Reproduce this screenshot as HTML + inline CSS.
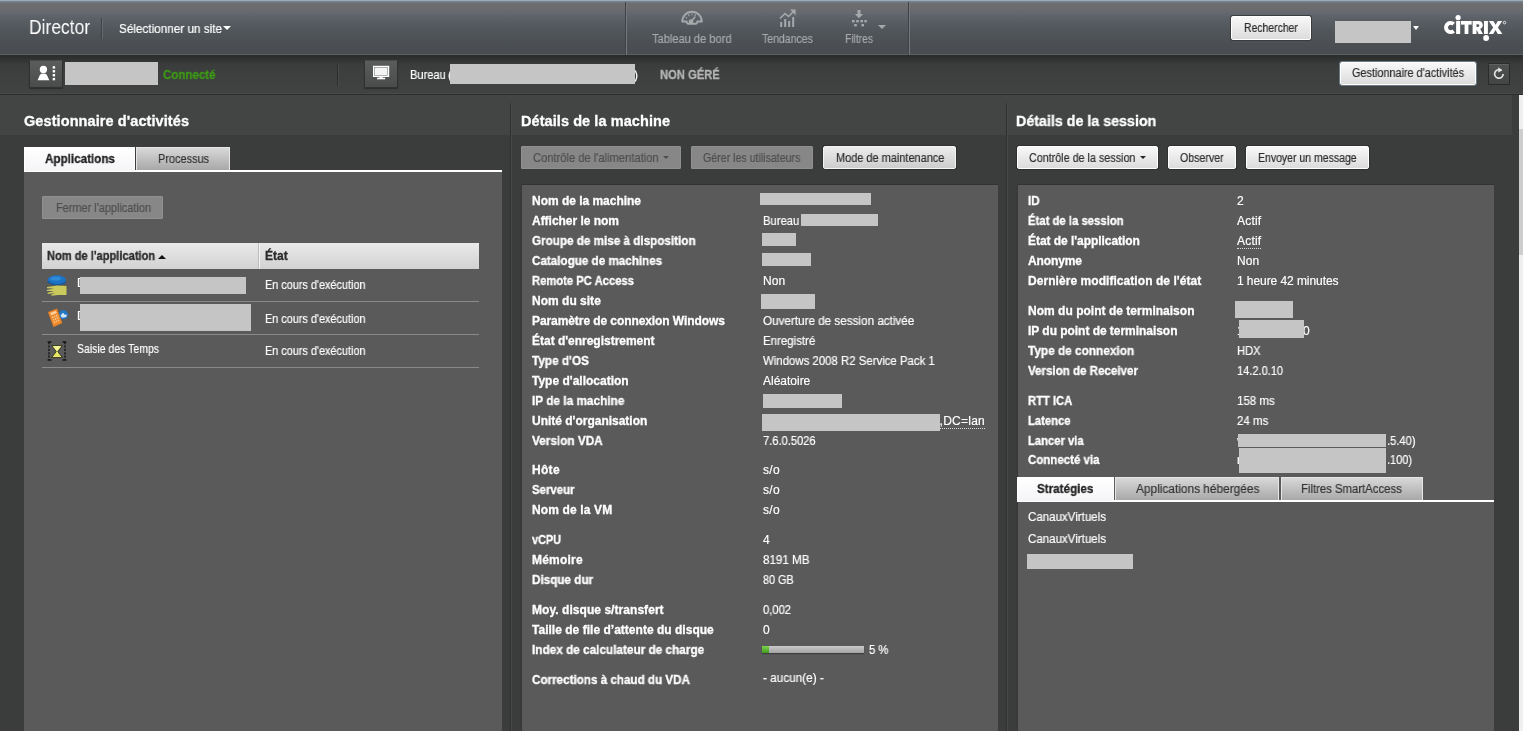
<!DOCTYPE html>
<html>
<head>
<meta charset="utf-8">
<title>Director</title>
<style>
*{box-sizing:border-box;margin:0;padding:0}
html,body{width:1523px;height:731px;overflow:hidden;background:#3b3d3c;}
body{font-family:"Liberation Sans",sans-serif;font-size:12px;color:#fff;position:relative}
.abs{position:absolute}
#hdr{left:0;top:0;width:1523px;height:55px;border-bottom:1px solid #5c6064;background:linear-gradient(#7a8591 0,#6e6d70 5%,#6c6b6e 14%,#646970 22%,#5b6066 33%,#51565b 55%,#4b4f53 82%,#494d51 100%);border-top:1px solid #9aabba}
#hdrshadow{left:0;top:55px;width:1523px;height:9px;background:linear-gradient(#2a2c2b,rgba(58,60,59,0))}
#sub{left:0;top:55px;width:1523px;height:40px;background:linear-gradient(#363837,#3d3f3e 40%,#414342)}
#subline{left:0;top:94px;width:1523px;height:1px;background:#2c2e2d}
#subline2{left:0;top:93px;width:1523px;height:1px;background:#484a49}
.band{top:95px;height:40px;background:#434544}
.t{position:absolute;white-space:nowrap;will-change:transform}
.red{position:absolute;background:#c5c5c5}
.btn{position:absolute;border-radius:2px;background:linear-gradient(#f8f8f8,#dcdcdc);border:1px solid #fff;box-shadow:0 0 0 1px #2f3130}
.btn.dis{background:#868786;border:1px solid #8f908f;box-shadow:none;border-radius:1px}
.panel{position:absolute;background:#5a5a5a}
.tab{position:absolute;background:linear-gradient(#d8d8d8,#a8a8a8);border:1px solid #e6e6e6;border-bottom:none}
.tab.act{background:linear-gradient(#fff,#f4f4f7);border-color:#fff}
.dot{border-bottom:1px dotted #ddd}
.hl{position:absolute;height:1px;background:#8a8a8a}
.arr{position:absolute;width:0;height:0;border-left:4px solid transparent;border-right:4px solid transparent;border-top:4px solid #fff}
</style>
</head>
<body>
<div id="hdr" class="abs"></div>
<div id="sub" class="abs"></div>
<div id="hdrshadow" class="abs"></div>
<div id="subline" class="abs"></div>
<div id="subline2" class="abs"></div>
<div class="abs band" style="left:0;width:1512px"></div>

<div class="abs" style="left:510px;top:103px;width:1px;height:628px;background:#2f3130"></div>
<div class="abs" style="left:511px;top:103px;width:1px;height:628px;background:#484a49"></div>
<div class="abs" style="left:1006px;top:103px;width:1px;height:628px;background:#2f3130"></div>
<div class="abs" style="left:1007px;top:103px;width:1px;height:628px;background:#484a49"></div>


<div class="t" style="left:28.7px;top:16px;font-size:20.5px;line-height:22px;color:#fff;transform:scaleX(0.8514);transform-origin:0 0;-webkit-text-stroke:0.18px #fff;-webkit-text-stroke:0;">Director</div>
<div class="abs" style="left:101px;top:18px;width:1px;height:21px;background:#3f4246"></div><div class="abs" style="left:102px;top:18px;width:1px;height:21px;background:#66696d"></div>
<div class="t" style="left:119px;top:22px;font-size:13px;line-height:14px;color:#fff;transform:scaleX(0.9020);transform-origin:0 0;-webkit-text-stroke:0.18px #fff;">Sélectionner un site</div>
<div class="arr" style="left:222.6px;top:26px;border-top-width:4.4px"></div>
<!-- nav center -->
<div class="abs" style="left:625px;top:2px;width:1px;height:53px;background:#3f4246"></div>
<div class="abs" style="left:626px;top:2px;width:1px;height:53px;background:#74777b"></div>
<div class="abs" style="left:908px;top:2px;width:1px;height:53px;background:#3f4246"></div>
<div class="abs" style="left:909px;top:2px;width:1px;height:53px;background:#74777b"></div>
<svg class="abs" style="left:680px;top:9px" width="24" height="18" viewBox="0 0 24 18" fill="none" stroke="#a6a9ac" stroke-width="1.9" stroke-linecap="round" stroke-linejoin="round">
<path d="M2.2 12.5 A9.8 9.8 0 0 1 21.8 12.5 L17.3 12.5 A2 2 0 0 1 15.5 14.8 L8.5 14.8 A2 2 0 0 1 6.7 12.5 Z"/>
<circle cx="11" cy="12.6" r="1.5" fill="#a6a9ac"/>
<path d="M11.6 12 L14.8 8.2" stroke-width="1.7"/>
<path d="M6 8.5 l.8 .6 M8.6 5.8 l.5 .9 M12 4.8 v1 M15.4 5.8 l-.5 .9" stroke-width="1.1"/>
</svg>
<div class="t" style="left:651.8px;top:32px;font-size:12px;line-height:14px;color:#a6a9ac;transform:scaleX(0.9236);transform-origin:0 0;-webkit-text-stroke:0.18px #a6a9ac;">Tableau de bord</div>
<svg class="abs" style="left:779px;top:9px" width="18" height="19" viewBox="0 0 18 19" fill="none" stroke="#a6a9ac" stroke-width="2">
<path d="M2.2 18v-5M6.2 18v-8M10.2 18v-6M14.2 18v-10"/>
<path d="M1 9.5 L6 4.5 L9.5 7.5 L15 2" stroke-width="1.6"/>
<path d="M11 .6 H16.6 V6.2 Z" fill="#a6a9ac" stroke="none"/>
</svg>
<div class="t" style="left:762.3px;top:32px;font-size:12px;line-height:14px;color:#a6a9ac;transform:scaleX(0.8769);transform-origin:0 0;-webkit-text-stroke:0.18px #a6a9ac;">Tendances</div>
<svg class="abs" style="left:850px;top:9px" width="18" height="19" viewBox="0 0 18 19" fill="#a6a9ac">
<path d="M7.5 1h3v4h2.6L9 9.2 4.9 5h2.6z"/>
<rect x="2" y="11" width="2.6" height="2.4"/><rect x="6.2" y="11" width="2.6" height="2.4"/><rect x="10.4" y="11" width="2.6" height="2.4"/><rect x="14.4" y="11" width="2.4" height="2.4"/>
<rect x="4.2" y="15" width="2.6" height="2.4"/><rect x="11.4" y="15" width="2.6" height="2.4"/>
</svg>
<div class="arr" style="left:877.5px;top:25px;border-top-color:#a6a9ac"></div>
<div class="t" style="left:844.5px;top:32px;font-size:12px;line-height:14px;color:#a6a9ac;transform:scaleX(0.8539);transform-origin:0 0;-webkit-text-stroke:0.18px #a6a9ac;">Filtres</div>
<!-- right -->
<div class="btn" style="left:1231px;top:16px;width:80px;height:24px;box-shadow:0 0 0 1px #3a3d40"></div>
<div class="t" style="left:1244.1px;top:21px;font-size:12px;line-height:14px;color:#2c2c2c;transform:scaleX(0.8689);transform-origin:0 0;-webkit-text-stroke:0.18px #2c2c2c;">Rechercher</div>
<div class="red" style="left:1335px;top:21px;width:76px;height:22px"></div>
<div class="arr" style="left:1413px;top:26px;border-left-width:3.5px;border-right-width:3.5px"></div>
<svg class="abs" style="left:1440px;top:12px" width="70" height="32" viewBox="1440 12 70 32" fill="#fff">
<path d="M1453.7 24.0 A4.65 4.65 0 1 0 1453.7 31.0" fill="none" stroke="#fff" stroke-width="3.9"/>
<rect x="1456.1" y="21" width="4.1" height="13"/><circle cx="1458.1" cy="17.6" r="2.6"/>
<rect x="1461" y="21" width="10.7" height="3.6"/><rect x="1464.6" y="21" width="3.8" height="13"/>
<path d="M1472.6 21 H1478.6 A4.1 4.1 0 0 1 1480.2 28.9 L1483 34 H1478.6 L1476.5 29.6 V34 H1472.6 Z M1476.5 24.2 V26.9 H1478 A1.35 1.35 0 0 0 1478 24.2 Z" fill-rule="evenodd"/>
<rect x="1484" y="21" width="3.9" height="13"/><circle cx="1486.1" cy="38" r="2.9"/>
<path d="M1488.8 21 H1493.4 L1495.6 24.8 L1497.8 21 H1502.2 L1497.9 27.4 L1502.4 34 H1497.8 L1495.5 30 L1493.2 34 H1488.7 L1493.2 27.4 Z"/>
<circle cx="1504.5" cy="22.6" r="1.25" fill="none" stroke="#fff" stroke-width=".8"/>
</svg>


<!-- user button -->
<div class="abs" style="left:29px;top:60px;width:34px;height:28px;background:linear-gradient(#5b5d5c,#4a4c4b);border:1px solid #303231;border-top-color:#484a49;border-radius:1px;box-shadow:0 1px 1px #2c2d2d"></div>
<svg class="abs" style="left:34px;top:62px" width="26" height="22" viewBox="34 62 26 22" fill="#fff">
<circle cx="43.4" cy="69.4" r="3.65"/><path d="M37.6 80.3 L39.9 74.9 Q40.6 73.6 43.4 73.6 Q46.2 73.6 46.9 74.9 L49.3 80.3 Z"/>
<rect x="52.7" y="66.2" width="2.4" height="2.4"/><rect x="52.7" y="70.1" width="2.4" height="2.4"/><rect x="52.7" y="74" width="2.4" height="2.4"/><rect x="52.7" y="77.9" width="2.4" height="2.4"/>
</svg>
<div class="red" style="left:65px;top:62px;width:93px;height:23px"></div>
<div class="t" style="left:163.4px;top:68px;font-size:12.5px;line-height:14px;color:#3c9a16;transform:scaleX(0.9201);transform-origin:0 0;font-weight:bold;-webkit-text-stroke:0.3px #3c9a16;">Connecté</div>
<div class="abs" style="left:337px;top:64px;width:1px;height:22px;background:#2c2d2d"></div>
<div class="abs" style="left:338px;top:64px;width:1px;height:22px;background:#484a49"></div>
<!-- monitor button -->
<div class="abs" style="left:364px;top:60px;width:34px;height:28px;background:linear-gradient(#5b5d5c,#4a4c4b);border:1px solid #303231;border-top-color:#484a49;border-radius:1px;box-shadow:0 1px 1px #2c2d2d"></div>
<svg class="abs" style="left:370px;top:63px" width="22" height="20" viewBox="370 63 22 20">
<rect x="373" y="65.8" width="16.2" height="11.2" fill="#fff"/><rect x="374.5" y="67.3" width="13.2" height="8.2" fill="#f4f4f4" stroke="#6a6a6a" stroke-width=".5"/>
<rect x="379.5" y="77" width="3.2" height="1" fill="#e8e8e8"/><rect x="377" y="77.7" width="8.2" height="1.6" fill="#fff"/>
</svg>
<div class="t" style="left:409.5px;top:68px;font-size:12px;line-height:14px;color:#fff;transform:scaleX(0.9250);transform-origin:0 0;-webkit-text-stroke:0.18px #fff;">Bureau</div><div class="t" style="left:448.2px;top:68px;font-size:12px;line-height:14px;color:#fff;-webkit-text-stroke:0.18px #fff;">(</div>
<div class="t" style="left:634px;top:68px;font-size:12px;line-height:14px;color:#fff;-webkit-text-stroke:0.18px #fff;">)</div>
<div class="red" style="left:450px;top:64px;width:185px;height:20px"></div>
<div class="t" style="left:660.3px;top:68px;font-size:12.5px;line-height:14px;color:#b5b5b5;transform:scaleX(0.8967);transform-origin:0 0;font-weight:bold;-webkit-text-stroke:0.3px #b5b5b5;">NON GÉRÉ</div>
<div class="btn" style="left:1340px;top:62px;width:136px;height:23px;box-shadow:0 0 0 1px #6c7986"></div>
<div class="t" style="left:1352.1px;top:66px;font-size:12px;line-height:14px;color:#2c2c2c;transform:scaleX(0.9055);transform-origin:0 0;-webkit-text-stroke:0.18px #2c2c2c;">Gestionnaire d'activités</div>
<div class="abs" style="left:1488px;top:63px;width:22px;height:22px;background:linear-gradient(#505251,#434544);border:1px solid #2a2b2b;box-shadow:inset 0 1px 0 #5f6160"></div>
<svg class="abs" style="left:1492px;top:66px" width="14" height="15" viewBox="0 0 14 15" fill="none" stroke="#e8e8e8" stroke-width="1.6">
<path d="M9.6 4.6 A4.3 4.3 0 1 0 11.2 8"/><path d="M6.3 1.2 L10.2 4.3 L6.3 6.4" stroke="none" fill="#e8e8e8"/>
</svg>


<div class="t" style="left:24.2px;top:112px;font-size:14.5px;line-height:18px;color:#fff;letter-spacing:0.086px;font-weight:bold;-webkit-text-stroke:0.3px #fff;">Gestionnaire d'activités</div>
<div class="panel" style="left:24px;top:172px;width:478px;height:559px"></div>
<div class="abs" style="left:24px;top:170px;width:478px;height:2px;background:#fff"></div>
<div class="tab act" style="left:24px;top:147px;width:111px;height:24px"></div>
<div class="tab" style="left:136px;top:147px;width:94px;height:23px"></div>
<div class="t" style="left:45.2px;top:152px;font-size:12.5px;line-height:14px;color:#222;transform:scaleX(0.9318);transform-origin:0 0;font-weight:bold;-webkit-text-stroke:0.3px #222;">Applications</div>
<div class="t" style="left:157.8px;top:152px;font-size:12.5px;line-height:14px;color:#333;transform:scaleX(0.8739);transform-origin:0 0;-webkit-text-stroke:0.18px #333;">Processus</div>
<div class="btn dis" style="left:42px;top:196px;width:121px;height:23px"></div>
<div class="t" style="left:55.5px;top:201px;font-size:12px;line-height:14px;color:#4d4e4d;transform:scaleX(0.9105);transform-origin:0 0;-webkit-text-stroke:0.18px #4d4e4d;">Fermer l'application</div>
<div class="abs" style="left:42px;top:243px;width:437px;height:26px;background:linear-gradient(#e9e9e9,#d2d2d2)"></div>
<div class="abs" style="left:258px;top:243px;width:1px;height:26px;background:#bdbdbd"></div>
<div class="abs" style="left:259px;top:243px;width:1px;height:26px;background:#f2f2f2"></div>
<div class="t" style="left:46.9px;top:249px;font-size:12px;line-height:14px;color:#2a2a2a;transform:scaleX(0.9249);transform-origin:0 0;font-weight:bold;-webkit-text-stroke:0.3px #2a2a2a;">Nom de l'application</div>
<div class="abs" style="left:157.6px;top:254.6px;width:0;height:0;border-left:4px solid transparent;border-right:4px solid transparent;border-bottom:4.4px solid #111"></div>
<div class="t" style="left:265px;top:249px;font-size:12px;line-height:14px;color:#2a2a2a;font-weight:bold;-webkit-text-stroke:0.3px #2a2a2a;">État</div>
<div class="hl" style="left:42px;top:301px;width:437px"></div><div class="hl" style="left:42px;top:334px;width:437px"></div><div class="hl" style="left:42px;top:367px;width:437px"></div>
<div class="t" style="left:77px;top:276px;font-size:12px;line-height:14px;color:#fff;-webkit-text-stroke:0.18px #fff;">D</div>
<div class="t" style="left:77px;top:309px;font-size:12px;line-height:14px;color:#fff;-webkit-text-stroke:0.18px #fff;">D</div>
<div class="red" style="left:80px;top:277px;width:166px;height:17px"></div>
<div class="red" style="left:80px;top:304px;width:171px;height:27px"></div>
<div class="t" style="left:77px;top:342px;font-size:12px;line-height:14px;color:#fff;transform:scaleX(0.8739);transform-origin:0 0;-webkit-text-stroke:0.18px #fff;">Saisie des Temps</div>
<div class="t" style="left:265px;top:278px;font-size:12px;line-height:14px;color:#fff;transform:scaleX(0.9052);transform-origin:0 0;-webkit-text-stroke:0.18px #fff;">En cours d'exécution</div>
<div class="t" style="left:265px;top:312px;font-size:12px;line-height:14px;color:#fff;transform:scaleX(0.9052);transform-origin:0 0;-webkit-text-stroke:0.18px #fff;">En cours d'exécution</div>
<div class="t" style="left:265px;top:344px;font-size:12px;line-height:14px;color:#fff;transform:scaleX(0.9052);transform-origin:0 0;-webkit-text-stroke:0.18px #fff;">En cours d'exécution</div>
<!-- icons -->
<svg class="abs" style="left:44px;top:272px" width="28" height="92" viewBox="44 272 28 92">
<ellipse cx="56.8" cy="280" rx="9.3" ry="4.7" fill="#1d74c4"/><ellipse cx="55.5" cy="278.6" rx="5.5" ry="2" fill="#2f8ad8"/>
<path d="M47.5 281 q4 4 9 3.5 q6 .3 9.5 -3" fill="none" stroke="#155a9c" stroke-width="1.2"/>
<path d="M66.5 286 L57 285.6 L47 287 L47 288.3 L54 288.4 L46.8 289.9 L46.8 291.1 L54 290.9 L47.5 292.7 L47.8 293.9 L55 293.1 L51 294.8 L51.6 295.7 L58 295.1 L66.5 295 Z" fill="#c9c95c"/>
<circle cx="63.3" cy="314.7" r="4.6" fill="#2278c6"/><path d="M60.5 315.5 l2.5 -2.8 2.2 2.2 1.6 -.6 -.4 2.6 -4.4 .8z" fill="#d5e8f8"/>
<path d="M48.2 312.2 L56.8 308.8 L62 323 L53.6 326.8 Z" fill="#ee8c2e" stroke="#d8761c" stroke-width=".6"/>
<path d="M50.3 313 L56 310.8 L56.8 312.9 L51.1 315.2Z" fill="#fbd2a4"/>
<path d="M52 317.6 l5.6 -2.3 M52.9 320 l5.6 -2.3 M53.8 322.4 l5.6 -2.3" stroke="#fbd2a4" stroke-width="1.2" stroke-dasharray="1.4 .8"/>
<path d="M49 342 V360 M65 342 V360" stroke="#161616" stroke-width="1.4" stroke-dasharray="2.2 1.2"/>
<path d="M47.6 342 H51.5 M62.5 342 H66.4 M47.6 360 H51.5 M62.5 360 H66.4" stroke="#161616" stroke-width="1.3"/>
<path d="M51.6 345.6 H62.4 L57.8 351.6 L62.4 357.6 H51.6 L56.2 351.6 Z" fill="#e6e766" stroke="#2a2a20" stroke-width=".9"/>
<path d="M53.2 346.2 H60.8 L57 350.6 Z" fill="#f4f5a0"/>
</svg>


<div class="t" style="left:520.6px;top:112px;font-size:14.5px;line-height:18px;color:#fff;letter-spacing:0.076px;font-weight:bold;-webkit-text-stroke:0.3px #fff;">Détails de la machine</div>
<div class="btn dis" style="left:521px;top:146px;width:160px;height:23px"></div>
<div class="t" style="left:533.1px;top:151px;font-size:12px;line-height:14px;color:#4d4e4d;transform:scaleX(0.9300);transform-origin:0 0;-webkit-text-stroke:0.18px #4d4e4d;">Contrôle de l'alimentation</div>
<div class="arr" style="left:662.5px;top:156px;border-left-width:3px;border-right-width:3px;border-top-width:3px;border-top-color:#4d4e4d"></div>
<div class="btn dis" style="left:691px;top:146px;width:122px;height:23px"></div>
<div class="t" style="left:703.3px;top:151px;font-size:12px;line-height:14px;color:#4d4e4d;transform:scaleX(0.8851);transform-origin:0 0;-webkit-text-stroke:0.18px #4d4e4d;">Gérer les utilisateurs</div>
<div class="btn" style="left:823px;top:146px;width:133px;height:23px;background:linear-gradient(#ececec,#cdcdcd);border-color:#f4f4f4"></div>
<div class="t" style="left:835.7px;top:151px;font-size:12px;line-height:14px;color:#2c2c2c;transform:scaleX(0.9128);transform-origin:0 0;-webkit-text-stroke:0.18px #2c2c2c;">Mode de maintenance</div>
<div class="panel" style="left:521px;top:184px;width:477px;height:547px;border-top:1px solid #323332;border-left:1px solid #363736"></div>
<div class="t" style="left:532.3px;top:194px;font-size:12px;line-height:14px;color:#fff;letter-spacing:-0.023px;font-weight:bold;-webkit-text-stroke:0.3px #fff;">Nom de la machine</div>
<div class="t" style="left:532.3px;top:214px;font-size:12px;line-height:14px;color:#fff;letter-spacing:-0.026px;font-weight:bold;-webkit-text-stroke:0.3px #fff;">Afficher le nom</div>
<div class="t" style="left:762.7px;top:214px;font-size:12px;line-height:14px;color:#fff;transform:scaleX(0.9379);transform-origin:0 0;-webkit-text-stroke:0.18px #fff;">Bureau</div>
<div class="t" style="left:532.3px;top:234px;font-size:12px;line-height:14px;color:#fff;transform:scaleX(0.9736);transform-origin:0 0;font-weight:bold;-webkit-text-stroke:0.3px #fff;">Groupe de mise à disposition</div>
<div class="t" style="left:532.3px;top:254px;font-size:12px;line-height:14px;color:#fff;transform:scaleX(0.9713);transform-origin:0 0;font-weight:bold;-webkit-text-stroke:0.3px #fff;">Catalogue de machines</div>
<div class="t" style="left:532.3px;top:274px;font-size:12px;line-height:14px;color:#fff;transform:scaleX(0.9354);transform-origin:0 0;font-weight:bold;-webkit-text-stroke:0.3px #fff;">Remote PC Access</div>
<div class="t" style="left:762.7px;top:274px;font-size:12px;line-height:14px;color:#fff;letter-spacing:0.142px;-webkit-text-stroke:0.18px #fff;">Non</div>
<div class="t" style="left:532.3px;top:294px;font-size:12px;line-height:14px;color:#fff;letter-spacing:0.013px;font-weight:bold;-webkit-text-stroke:0.3px #fff;">Nom du site</div>
<div class="t" style="left:532.3px;top:314px;font-size:12px;line-height:14px;color:#fff;letter-spacing:-0.082px;font-weight:bold;-webkit-text-stroke:0.3px #fff;">Paramètre de connexion Windows</div>
<div class="t" style="left:762.7px;top:314px;font-size:12px;line-height:14px;color:#fff;transform:scaleX(0.9735);transform-origin:0 0;-webkit-text-stroke:0.18px #fff;">Ouverture de session activée</div>
<div class="t" style="left:532.3px;top:334px;font-size:12px;line-height:14px;color:#fff;letter-spacing:-0.015px;font-weight:bold;-webkit-text-stroke:0.3px #fff;">État d'enregistrement</div>
<div class="t" style="left:762.7px;top:334px;font-size:12px;line-height:14px;color:#fff;transform:scaleX(0.9561);transform-origin:0 0;-webkit-text-stroke:0.18px #fff;">Enregistré</div>
<div class="t" style="left:532.3px;top:354px;font-size:12px;line-height:14px;color:#fff;transform:scaleX(0.9813);transform-origin:0 0;font-weight:bold;-webkit-text-stroke:0.3px #fff;">Type d'OS</div>
<div class="t" style="left:762.7px;top:354px;font-size:12px;line-height:14px;color:#fff;transform:scaleX(0.9505);transform-origin:0 0;-webkit-text-stroke:0.18px #fff;">Windows 2008 R2 Service Pack 1</div>
<div class="t" style="left:532.3px;top:374px;font-size:12px;line-height:14px;color:#fff;letter-spacing:0.003px;font-weight:bold;-webkit-text-stroke:0.3px #fff;">Type d'allocation</div>
<div class="t" style="left:762.7px;top:374px;font-size:12px;line-height:14px;color:#fff;letter-spacing:-0.009px;-webkit-text-stroke:0.18px #fff;">Aléatoire</div>
<div class="t" style="left:532.3px;top:394px;font-size:12px;line-height:14px;color:#fff;transform:scaleX(0.9837);transform-origin:0 0;font-weight:bold;-webkit-text-stroke:0.3px #fff;">IP de la machine</div>
<div class="t" style="left:532.3px;top:414px;font-size:12px;line-height:14px;color:#fff;letter-spacing:-0.012px;font-weight:bold;-webkit-text-stroke:0.3px #fff;">Unité d'organisation</div>
<div class="t" style="left:532.3px;top:434px;font-size:12px;line-height:14px;color:#fff;transform:scaleX(0.9815);transform-origin:0 0;font-weight:bold;-webkit-text-stroke:0.3px #fff;">Version VDA</div>
<div class="t" style="left:762.7px;top:434px;font-size:12px;line-height:14px;color:#fff;transform:scaleX(0.9274);transform-origin:0 0;-webkit-text-stroke:0.18px #fff;">7.6.0.5026</div>
<div class="t" style="left:532.3px;top:463px;font-size:12px;line-height:14px;color:#fff;letter-spacing:0.309px;font-weight:bold;-webkit-text-stroke:0.3px #fff;">Hôte</div>
<div class="t" style="left:762.7px;top:463px;font-size:12px;line-height:14px;color:#fff;letter-spacing:0.292px;-webkit-text-stroke:0.18px #fff;">s/o</div>
<div class="t" style="left:532.3px;top:483px;font-size:12px;line-height:14px;color:#fff;transform:scaleX(0.9507);transform-origin:0 0;font-weight:bold;-webkit-text-stroke:0.3px #fff;">Serveur</div>
<div class="t" style="left:762.7px;top:483px;font-size:12px;line-height:14px;color:#fff;letter-spacing:0.292px;-webkit-text-stroke:0.18px #fff;">s/o</div>
<div class="t" style="left:532.3px;top:503px;font-size:12px;line-height:14px;color:#fff;letter-spacing:0.138px;font-weight:bold;-webkit-text-stroke:0.3px #fff;">Nom de la VM</div>
<div class="t" style="left:762.7px;top:503px;font-size:12px;line-height:14px;color:#fff;letter-spacing:0.292px;-webkit-text-stroke:0.18px #fff;">s/o</div>
<div class="t" style="left:532.3px;top:533px;font-size:12px;line-height:14px;color:#fff;transform:scaleX(0.9089);transform-origin:0 0;font-weight:bold;-webkit-text-stroke:0.3px #fff;">vCPU</div>
<div class="t" style="left:762.7px;top:533px;font-size:12px;line-height:14px;color:#fff;-webkit-text-stroke:0.18px #fff;">4</div>
<div class="t" style="left:532.3px;top:553px;font-size:12px;line-height:14px;color:#fff;letter-spacing:0.223px;font-weight:bold;-webkit-text-stroke:0.3px #fff;">Mémoire</div>
<div class="t" style="left:762.7px;top:553px;font-size:12px;line-height:14px;color:#fff;transform:scaleX(0.9681);transform-origin:0 0;-webkit-text-stroke:0.18px #fff;">8191 MB</div>
<div class="t" style="left:532.3px;top:573px;font-size:12px;line-height:14px;color:#fff;transform:scaleX(0.9749);transform-origin:0 0;font-weight:bold;-webkit-text-stroke:0.3px #fff;">Disque dur</div>
<div class="t" style="left:762.7px;top:573px;font-size:12px;line-height:14px;color:#fff;transform:scaleX(0.8992);transform-origin:0 0;-webkit-text-stroke:0.18px #fff;">80 GB</div>
<div class="t" style="left:532.3px;top:603px;font-size:12px;line-height:14px;color:#fff;letter-spacing:0.051px;font-weight:bold;-webkit-text-stroke:0.3px #fff;">Moy. disque s/transfert</div>
<div class="t" style="left:762.7px;top:603px;font-size:12px;line-height:14px;color:#fff;transform:scaleX(0.9324);transform-origin:0 0;-webkit-text-stroke:0.18px #fff;">0,002</div>
<div class="t" style="left:532.3px;top:623px;font-size:12px;line-height:14px;color:#fff;letter-spacing:0.020px;font-weight:bold;-webkit-text-stroke:0.3px #fff;">Taille de file d’attente du disque</div>
<div class="t" style="left:762.7px;top:623px;font-size:12px;line-height:14px;color:#fff;-webkit-text-stroke:0.18px #fff;">0</div>
<div class="t" style="left:532.3px;top:643px;font-size:12px;line-height:14px;color:#fff;transform:scaleX(0.9812);transform-origin:0 0;font-weight:bold;-webkit-text-stroke:0.3px #fff;">Index de calculateur de charge</div>
<div class="t" style="left:532.3px;top:673px;font-size:12px;line-height:14px;color:#fff;transform:scaleX(0.9711);transform-origin:0 0;font-weight:bold;-webkit-text-stroke:0.3px #fff;">Corrections à chaud du VDA</div>
<div class="red" style="left:760px;top:193px;width:111px;height:12px"></div>
<div class="red" style="left:801px;top:214px;width:77px;height:12px"></div>
<div class="red" style="left:762px;top:233px;width:34px;height:13px"></div>
<div class="red" style="left:762px;top:253px;width:49px;height:13px"></div>
<div class="red" style="left:761px;top:294px;width:54px;height:15px"></div>
<div class="red" style="left:763px;top:394px;width:79px;height:14px"></div>
<div class="t" style="left:935.5px;top:414px;font-size:12px;line-height:14px;color:#fff;letter-spacing:0.253px;-webkit-text-stroke:0.18px #fff;"><span class="dot">t,DC=lan</span></div>
<div class="red" style="left:762px;top:414px;width:178px;height:17px"></div>
<div class="abs" style="left:762px;top:646px;width:102px;height:7px;background:linear-gradient(#cacaca,#a4a4a4);box-shadow:0 1px 1px rgba(0,0,0,.3)"></div>
<div class="abs" style="left:762px;top:646px;width:7px;height:7px;background:linear-gradient(#7fd34e,#3f9a1c)"></div>
<div class="t" style="left:868.8px;top:643px;font-size:12px;line-height:14px;color:#fff;transform:scaleX(0.9329);transform-origin:0 0;-webkit-text-stroke:0.18px #fff;">5 %</div>
<div class="t" style="left:763.1px;top:671px;font-size:12px;line-height:14px;color:#fff;transform:scaleX(0.9802);transform-origin:0 0;-webkit-text-stroke:0.18px #fff;">- aucun(e) -</div>


<div class="t" style="left:1016.2px;top:112px;font-size:14.5px;line-height:18px;color:#fff;transform:scaleX(0.9835);transform-origin:0 0;font-weight:bold;-webkit-text-stroke:0.3px #fff;">Détails de la session</div>
<div class="btn" style="left:1017px;top:146px;width:141px;height:23px"></div>
<div class="t" style="left:1028.9px;top:151px;font-size:12px;line-height:14px;color:#2c2c2c;transform:scaleX(0.8961);transform-origin:0 0;-webkit-text-stroke:0.18px #2c2c2c;">Contrôle de la session</div>
<div class="arr" style="left:1139.5px;top:156px;border-left-width:3px;border-right-width:3px;border-top-width:3px;border-top-color:#222"></div>
<div class="btn" style="left:1168px;top:146px;width:68px;height:23px"></div>
<div class="t" style="left:1180.2px;top:151px;font-size:12px;line-height:14px;color:#2c2c2c;transform:scaleX(0.8833);transform-origin:0 0;-webkit-text-stroke:0.18px #2c2c2c;">Observer</div>
<div class="btn" style="left:1246px;top:146px;width:123px;height:23px"></div>
<div class="t" style="left:1258.4px;top:151px;font-size:12px;line-height:14px;color:#2c2c2c;transform:scaleX(0.8746);transform-origin:0 0;-webkit-text-stroke:0.18px #2c2c2c;">Envoyer un message</div>
<div class="panel" style="left:1017px;top:184px;width:477px;height:547px;border-top:1px solid #323332;border-left:1px solid #363736"></div>
<div class="t" style="left:1028.4px;top:194px;font-size:12px;line-height:14px;color:#fff;transform:scaleX(0.9750);transform-origin:0 0;font-weight:bold;-webkit-text-stroke:0.3px #fff;">ID</div>
<div class="t" style="left:1236.9px;top:194px;font-size:12px;line-height:14px;color:#fff;-webkit-text-stroke:0.18px #fff;">2</div>
<div class="t" style="left:1028.4px;top:214px;font-size:12px;line-height:14px;color:#fff;transform:scaleX(0.9430);transform-origin:0 0;font-weight:bold;-webkit-text-stroke:0.3px #fff;">État de la session</div>
<div class="t" style="left:1236.9px;top:214px;font-size:12px;line-height:14px;color:#fff;letter-spacing:0.189px;-webkit-text-stroke:0.18px #fff;">Actif</div>
<div class="t" style="left:1028.4px;top:234px;font-size:12px;line-height:14px;color:#fff;letter-spacing:-0.049px;font-weight:bold;-webkit-text-stroke:0.3px #fff;">État de l'application</div>
<div class="t" style="left:1236.9px;top:234px;font-size:12px;line-height:14px;color:#fff;letter-spacing:0.189px;-webkit-text-stroke:0.18px #fff;"><span class="dot">Actif</span></div>
<div class="t" style="left:1028.4px;top:254px;font-size:12px;line-height:14px;color:#fff;letter-spacing:-0.131px;font-weight:bold;-webkit-text-stroke:0.3px #fff;">Anonyme</div>
<div class="t" style="left:1236.9px;top:254px;font-size:12px;line-height:14px;color:#fff;letter-spacing:0.092px;-webkit-text-stroke:0.18px #fff;">Non</div>
<div class="t" style="left:1028.4px;top:274px;font-size:12px;line-height:14px;color:#fff;letter-spacing:0.055px;font-weight:bold;-webkit-text-stroke:0.3px #fff;">Dernière modification de l'état</div>
<div class="t" style="left:1236.9px;top:274px;font-size:12px;line-height:14px;color:#fff;letter-spacing:-0.073px;-webkit-text-stroke:0.18px #fff;">1 heure 42 minutes</div>
<div class="t" style="left:1028.4px;top:304px;font-size:12px;line-height:14px;color:#fff;letter-spacing:0.019px;font-weight:bold;-webkit-text-stroke:0.3px #fff;">Nom du point de terminaison</div>
<div class="t" style="left:1028.4px;top:324px;font-size:12px;line-height:14px;color:#fff;letter-spacing:-0.039px;font-weight:bold;-webkit-text-stroke:0.3px #fff;">IP du point de terminaison</div>
<div class="t" style="left:1028.4px;top:344px;font-size:12px;line-height:14px;color:#fff;transform:scaleX(0.9843);transform-origin:0 0;font-weight:bold;-webkit-text-stroke:0.3px #fff;">Type de connexion</div>
<div class="t" style="left:1236.9px;top:344px;font-size:12px;line-height:14px;color:#fff;transform:scaleX(0.9312);transform-origin:0 0;-webkit-text-stroke:0.18px #fff;">HDX</div>
<div class="t" style="left:1028.4px;top:364px;font-size:12px;line-height:14px;color:#fff;transform:scaleX(0.9634);transform-origin:0 0;font-weight:bold;-webkit-text-stroke:0.3px #fff;">Version de Receiver</div>
<div class="t" style="left:1236.9px;top:364px;font-size:12px;line-height:14px;color:#fff;transform:scaleX(0.9211);transform-origin:0 0;-webkit-text-stroke:0.18px #fff;">14.2.0.10</div>
<div class="t" style="left:1028.4px;top:394px;font-size:12px;line-height:14px;color:#fff;transform:scaleX(0.9339);transform-origin:0 0;font-weight:bold;-webkit-text-stroke:0.3px #fff;">RTT ICA</div>
<div class="t" style="left:1236.9px;top:394px;font-size:12px;line-height:14px;color:#fff;transform:scaleX(0.9604);transform-origin:0 0;-webkit-text-stroke:0.18px #fff;">158 ms</div>
<div class="t" style="left:1028.4px;top:414px;font-size:12px;line-height:14px;color:#fff;transform:scaleX(0.9370);transform-origin:0 0;font-weight:bold;-webkit-text-stroke:0.3px #fff;">Latence</div>
<div class="t" style="left:1236.9px;top:414px;font-size:12px;line-height:14px;color:#fff;transform:scaleX(0.9545);transform-origin:0 0;-webkit-text-stroke:0.18px #fff;">24 ms</div>
<div class="t" style="left:1028.4px;top:434px;font-size:12px;line-height:14px;color:#fff;transform:scaleX(0.9364);transform-origin:0 0;font-weight:bold;-webkit-text-stroke:0.3px #fff;">Lancer via</div>
<div class="t" style="left:1028.4px;top:453px;font-size:12px;line-height:14px;color:#fff;transform:scaleX(0.9571);transform-origin:0 0;font-weight:bold;-webkit-text-stroke:0.3px #fff;">Connecté via</div>
<div class="red" style="left:1235px;top:301px;width:58px;height:17px"></div>
<div class="t" style="left:1236.9px;top:324px;font-size:12px;line-height:14px;color:#fff;-webkit-text-stroke:0.18px #fff;">1</div><div class="t" style="left:1302.5px;top:324px;font-size:12px;line-height:14px;color:#fff;-webkit-text-stroke:0.18px #fff;">0</div>
<div class="red" style="left:1239px;top:320px;width:65px;height:18px"></div>
<div class="t" style="left:1236.9px;top:434px;font-size:12px;line-height:14px;color:#fff;-webkit-text-stroke:0.18px #fff;">v</div><div class="t" style="left:1386.6px;top:434px;font-size:12px;line-height:14px;color:#fff;transform:scaleX(0.9287);transform-origin:0 0;-webkit-text-stroke:0.18px #fff;">.5.40)</div>
<div class="t" style="left:1236.9px;top:453px;font-size:12px;line-height:14px;color:#fff;-webkit-text-stroke:0.18px #fff;">r</div><div class="t" style="left:1386.6px;top:453px;font-size:12px;line-height:14px;color:#fff;transform:scaleX(0.9138);transform-origin:0 0;-webkit-text-stroke:0.18px #fff;">.100)</div>
<div class="red" style="left:1238px;top:434px;width:148px;height:13px"></div>
<div class="red" style="left:1239px;top:448px;width:147px;height:25px"></div>
<div class="abs" style="left:1017px;top:500px;width:477px;height:2px;background:#fff"></div>
<div class="tab act" style="left:1017px;top:477px;width:97px;height:24px"></div>
<div class="tab" style="left:1115px;top:477px;width:164px;height:23px"></div>
<div class="tab" style="left:1281px;top:477px;width:142px;height:23px"></div>
<div class="t" style="left:1036.8px;top:482px;font-size:12.5px;line-height:14px;color:#222;transform:scaleX(0.9330);transform-origin:0 0;font-weight:bold;-webkit-text-stroke:0.3px #222;">Stratégies</div>
<div class="t" style="left:1135.6px;top:482px;font-size:12.5px;line-height:14px;color:#333;transform:scaleX(0.9496);transform-origin:0 0;-webkit-text-stroke:0.18px #333;">Applications hébergées</div>
<div class="t" style="left:1301.3px;top:482px;font-size:12.5px;line-height:14px;color:#333;transform:scaleX(0.9061);transform-origin:0 0;-webkit-text-stroke:0.18px #333;">Filtres SmartAccess</div>
<div class="t" style="left:1028.1px;top:510px;font-size:12px;line-height:14px;color:#fff;transform:scaleX(0.9609);transform-origin:0 0;-webkit-text-stroke:0.18px #fff;">CanauxVirtuels</div>
<div class="t" style="left:1028.1px;top:532px;font-size:12px;line-height:14px;color:#fff;transform:scaleX(0.9609);transform-origin:0 0;-webkit-text-stroke:0.18px #fff;">CanauxVirtuels</div>
<div class="red" style="left:1027px;top:554px;width:106px;height:15px"></div>
<!-- scrollbar -->
<div class="abs" style="left:1519px;top:95px;width:4px;height:636px;background:#f0eff0"></div>
<div class="abs" style="left:1519px;top:129px;width:4px;height:126px;background:#cdcdcd"></div>

</body>
</html>
